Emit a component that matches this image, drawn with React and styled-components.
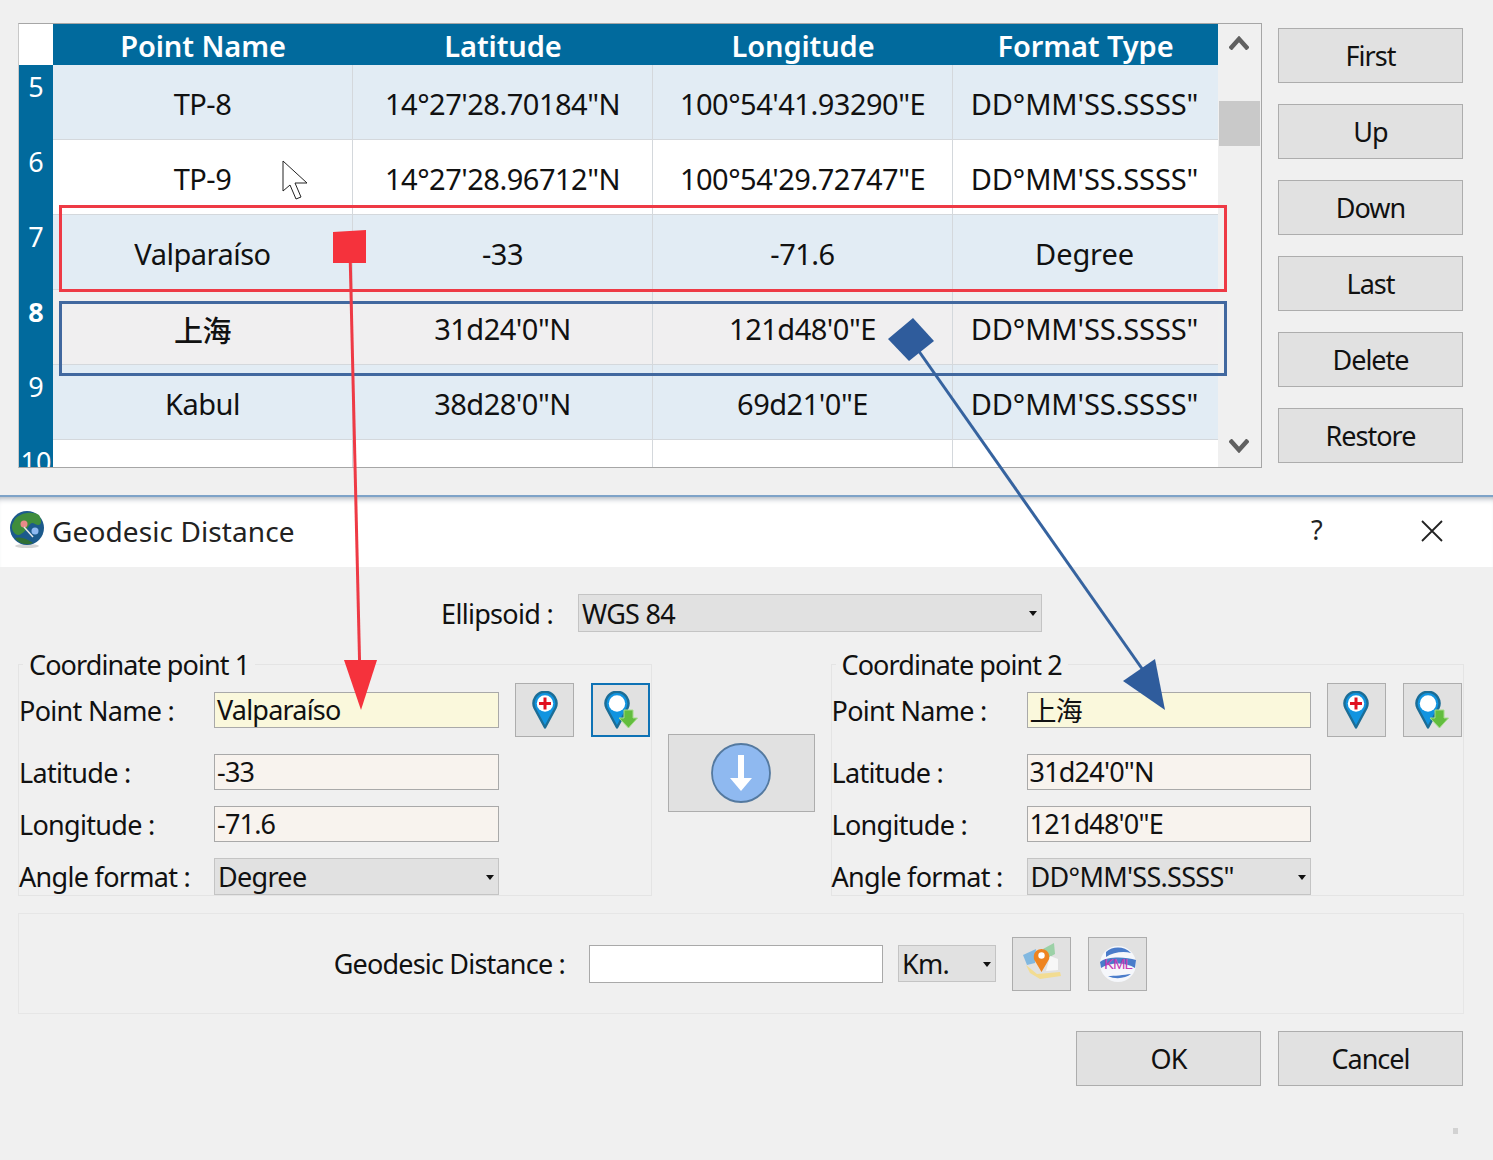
import React from 'react';
import styled, { createGlobalStyle } from 'styled-components';

const rows = [
  { no: 5, name: 'TP-8', lat: `14°27'28.70184"N`, lon: `100°54'41.93290"E`, format: `DD°MM'SS.SSSS"`, tone: 'blue' },
  { no: 6, name: 'TP-9', lat: `14°27'28.96712"N`, lon: `100°54'29.72747"E`, format: `DD°MM'SS.SSSS"`, tone: 'white' },
  { no: 7, name: 'Valparaíso', lat: '-33', lon: '-71.6', format: 'Degree', tone: 'blue' },
  { no: 8, name: '上海', lat: `31d24'0"N`, lon: `121d48'0"E`, format: `DD°MM'SS.SSSS"`, tone: 'grey', current: true },
  { no: 9, name: 'Kabul', lat: `38d28'0"N`, lon: `69d21'0"E`, format: `DD°MM'SS.SSSS"`, tone: 'blue' },
  { no: 10, name: '', lat: '', lon: '', format: '', tone: 'white' },
];

const tones = { blue: '#e2ecf4', white: '#ffffff', grey: '#f0eff0' };
const sideButtons = ['First', 'Up', 'Down', 'Last', 'Delete', 'Restore'];

const GlobalStyle = createGlobalStyle`
  html, body {
    margin: 0;
    padding: 0;
    background: #f0f0f0;
  }
  body {
    font-family: "Noto Sans", "Noto Sans CJK SC", sans-serif;
    color: #111;
  }
`;

const Page = styled.div`
  position: relative;
  width: 1493px;
  height: 1160px;
  overflow: hidden;
  background: #f0f0f0;
`;

const TopPanel = styled.div`
  display: flex;
  gap: 16px;
  padding: 23px 0 0 18px;
  box-sizing: border-box;
  height: 497px;
  border-bottom: 2px solid #7ea3c8;
`;

const Table = styled.div`
  display: grid;
  grid-template-columns: 1fr 43px;
  width: 1244px;
  height: 445px;
  box-sizing: border-box;
  border: 1px solid #a6a6a6;
  border-left-color: #c8c8c8;
  overflow: hidden;
`;

const Grid = styled.div`
  overflow: hidden;
`;

const Row = styled.div`
  display: grid;
  grid-template-columns: 34px 300px 300px 300px 1fr;
  height: ${(p) => (p.$head ? '41px' : '75px')};
`;

const Corner = styled.div`
  background: #fff;
`;

const HeadCell = styled.div`
  display: flex;
  align-items: center;
  justify-content: center;
  background: #016a9d;
  color: #fff;
  font-size: 29px;
  font-weight: 600;
  letter-spacing: -0.1px;
  padding-top: 2px;
  box-sizing: border-box;
  white-space: nowrap;
`;

const RowNo = styled.div`
  background: #016a9d;
  color: #fff;
  font-size: 27px;
  font-weight: ${(p) => (p.$current ? 700 : 400)};
  line-height: 44px;
  text-align: center;
`;

const Cell = styled.div`
  display: flex;
  align-items: center;
  justify-content: center;
  padding-top: 3px;
  box-sizing: border-box;
  background: ${(p) => tones[p.$tone]};
  border-right: 1px solid #d4d8dc;
  border-bottom: 1px solid #d4d8dc;
  font-size: 29px;
  letter-spacing: -0.5px;
  font-weight: ${(p) => (p.$bold ? 500 : 400)};
  white-space: nowrap;
  &:last-child {
    border-right: 0;
    letter-spacing: -0.1px;
    padding-right: 2px;
  }
`;

const Scrollbar = styled.div`
  display: flex;
  flex-direction: column;
  align-items: center;
  background: #f0f0f0;
  position: relative;
`;

const ScrollThumb = styled.div`
  width: 41px;
  height: 45px;
  margin-top: 77px;
  background: #c9c9c9;
`;

const ScrollArrow = styled.svg`
  position: absolute;
  left: 11px;
  top: ${(p) => p.$top}px;
`;

const SideButtons = styled.div`
  display: flex;
  flex-direction: column;
  gap: 21px;
  padding-top: 5px;
`;

const Button = styled.div`
  display: flex;
  align-items: center;
  justify-content: center;
  width: ${(p) => p.$w || 185}px;
  height: ${(p) => p.$h || 55}px;
  flex: none;
  box-sizing: border-box;
  background: #e1e1e1;
  border: ${(p) => (p.$focus ? '2px solid #0e72b5' : '1px solid #adadad')};
  font-size: 27px;
  letter-spacing: -1px;
`;

const TitleBar = styled.div`
  display: flex;
  align-items: center;
  height: 70px;
  background: #fff;
  padding-left: 9px;
  box-shadow: inset 0 6px 6px -5px #9aa3ad;
  font-size: 28px;
  letter-spacing: 0.1px;
  color: #222;
`;

const TitleText = styled.div`
  margin-left: 7px;
  padding-bottom: 2px;
  flex: 1;
`;

const HelpMark = styled.div`
  width: 72px;
  padding-bottom: 5px;
  font-size: 27px;
`;

const CloseMark = styled.svg`
  margin-right: 50px;
  margin-left: 38px;
  margin-bottom: 2px;
`;

const GlobeSvg = styled.svg`
  flex: none;
  margin-bottom: 5px;
`;

const Dialog = styled.div`
  padding: 27px 29px 0 18px;
`;

const EllipsoidRow = styled.div`
  display: flex;
  align-items: center;
  height: 38px;
  margin-bottom: 32px;
`;

const EllipsoidLabel = styled.div`
  width: 560px;
  padding-right: 25px;
  box-sizing: border-box;
  text-align: right;
  font-size: 27px;
  letter-spacing: -0.7px;
`;

const Select = styled.div`
  position: relative;
  display: flex;
  align-items: center;
  width: ${(p) => p.$w}px;
  height: ${(p) => p.$h || 38}px;
  margin-left: ${(p) => p.$left || 0}px;
  padding-left: 3px;
  box-sizing: border-box;
  background: #e1e1e1;
  border: 1px solid #c4c4c4;
  font-size: 27px;
  letter-spacing: -0.7px;
  white-space: nowrap;
  &::after {
    content: '';
    position: absolute;
    right: 4px;
    top: 50%;
    margin-top: -2px;
    border: 4px solid transparent;
    border-top: 5px solid #111;
    border-bottom: 0;
  }
`;

const Groups = styled.div`
  display: flex;
  gap: 16px;
`;

const Group = styled.div`
  position: relative;
  width: 634px;
  height: 232px;
  box-sizing: border-box;
  padding: 18px 0 0 0;
  border: 1px solid #e4e4e4;
`;

const GroupTitle = styled.div`
  position: absolute;
  left: 4px;
  top: -18px;
  padding: 0 6px;
  background: #f0f0f0;
  font-size: 27px;
  letter-spacing: -0.9px;
  line-height: 36px;
`;

const Field = styled.div`
  display: flex;
  align-items: center;
  height: ${(p) => p.$h || 36}px;
  margin-bottom: ${(p) => p.$gap || 16}px;
`;

const FieldLabel = styled.div`
  width: 195px;
  flex: none;
  font-size: 27px;
  letter-spacing: -0.7px;
  white-space: nowrap;
`;

const Input = styled.div`
  display: flex;
  align-items: center;
  width: ${(p) => p.$w || 285}px;
  height: ${(p) => p.$h || 36}px;
  padding: 0 0 2px 2px;
  box-sizing: border-box;
  flex: none;
  background: ${(p) => p.$bg || '#f8f3ee'};
  border: 1px solid #a9a9a9;
  font-size: 27px;
  letter-spacing: -0.8px;
`;

const PinButtons = styled.div`
  display: flex;
  gap: 17px;
  margin-left: 16px;
`;

const MiddleColumn = styled.div`
  padding-top: 70px;
`;

const DistanceBox = styled.div`
  display: flex;
  align-items: center;
  height: 101px;
  margin-top: 17px;
  box-sizing: border-box;
  border: 1px solid #e6e6e6;
`;

const DistanceLabel = styled.div`
  width: 570px;
  padding-right: 24px;
  box-sizing: border-box;
  text-align: right;
  font-size: 27px;
  letter-spacing: -0.8px;
`;

const DistanceTools = styled.div`
  display: flex;
  gap: 17px;
  margin-left: 16px;
`;

const Footer = styled.div`
  display: flex;
  justify-content: flex-end;
  gap: 17px;
  margin-top: 17px;
  padding-right: 1px;
`;

const Grip = styled.div`
  position: absolute;
  right: 35px;
  bottom: 26px;
  width: 5px;
  height: 6px;
  background: #d2d2d2;
`;

const Annotations = styled.svg`
  position: absolute;
  left: 0;
  top: 0;
  pointer-events: none;
`;

const AddPin = () => (
  <svg width="26" height="38" viewBox="0 0 26 38">
    <path d="M13 36.5 L2.5 17 A11.5 11.5 0 1 1 23.5 17 Z" fill="#1194e0" stroke="#1c6d96" strokeWidth="2.4" strokeLinejoin="round" />
    <circle cx="13" cy="12.5" r="8.2" fill="#fff" />
    <path d="M13 6.5v12M7 12.5h12" stroke="#e01020" strokeWidth="3" />
  </svg>
);

const ImportPin = () => (
  <svg width="34" height="38" viewBox="0 0 34 38">
    <path d="M13 36.5 L2.5 17 A11.5 11.5 0 1 1 23.5 17 Z" fill="#1194e0" stroke="#1c6d96" strokeWidth="2.4" strokeLinejoin="round" />
    <circle cx="13" cy="12.5" r="8.2" fill="#fff" />
    <path d="M20 19h9v8h4.500L24.500 37 15 27h5z" fill="#62bd3e" stroke="#a6dc8c" strokeWidth="1" />
  </svg>
);

const DownCircle = () => (
  <svg width="60" height="60" viewBox="0 0 60 60">
    <circle cx="30" cy="30" r="29" fill="#8fb9f0" stroke="#54799f" strokeWidth="1.800" />
    <path d="M27 12h6v26h-6z" fill="#fff" />
    <path d="M19 35h22L30 48z" fill="#fff" />
  </svg>
);

const MapIcon = () => (
  <svg width="44" height="42" viewBox="0 0 44 42">
    <path d="M3 12 L16 6 L15 20 L7 22z" fill="#6aaee0" opacity="0.8" />
    <path d="M23 6 L34 0 L35 11 L28 15z" fill="#8fce9c" opacity="0.85" />
    <path d="M6 22 L17 31 L40 29 L41 33 L20 36 L10 30z" fill="#f2dc92" />
    <path d="M30 13 L38 16 L38 27 L26 28z" fill="#f7f7f7" />
    <path d="M21.500 29 L15 18 A7.800 7.800 0 1 1 28 18 Z" fill="#ee8420" />
    <circle cx="21.500" cy="12.500" r="3.200" fill="#fff" />
  </svg>
);

const KmlIcon = () => (
  <svg width="40" height="40" viewBox="0 0 40 40">
    <circle cx="20" cy="20" r="18" fill="#f5f7fb" />
    <path d="M8 8 C15 2 26 2 33 9 C26 7 15 8 8 13z" fill="#4a7cca" />
    <path d="M2 18 C10 12 28 13 38 16 L37 24 C28 18 12 18 3 24z" fill="#4a7cca" />
    <path d="M10 32 C18 36 28 34 33 30 C26 31 16 32 10 32z" fill="#4a7cca" />
    <text x="20" y="25" textAnchor="middle" fontSize="15" fontFamily="Liberation Sans" fill="#c43ab4">KML</text>
  </svg>
);

const GlobeIcon = () => (
  <GlobeSvg width="36" height="38" viewBox="0 0 36 38">
    <ellipse cx="18" cy="35" rx="12" ry="2" fill="#d5d5d5" />
    <circle cx="18" cy="17" r="17" fill="#1c5a8c" />
    <path d="M6 8 C12 1 24 0 30 4 C34 11 32 16 26 13 C20 9 20 19 12 23 C8 26 2 21 3 14z" fill="#3f8d3c" />
    <path d="M6 27 C12 25 20 29 24 32 C16 35 10 32 6 27z" fill="#2f6f34" />
    <circle cx="15" cy="13" r="3.500" fill="#e88a8a" />
    <circle cx="26" cy="20" r="3.500" fill="#8fb9f0" />
    <path d="M15 16 L24 26" stroke="#e8e8e8" strokeWidth="1.500" />
  </GlobeSvg>
);

const CoordinateGroup = ({ title, point, focus, inputWidth }) => (
  <Group>
    <GroupTitle>{title}</GroupTitle>
    <Field $h={54} $gap={17}>
      <FieldLabel>Point Name :</FieldLabel>
      <Input $bg="#faf8dc" $w={inputWidth}>{point.name}</Input>
      <PinButtons>
        <Button $w={59} $h={54}><AddPin /></Button>
        <Button $w={59} $h={54} $focus={focus}><ImportPin /></Button>
      </PinButtons>
    </Field>
    <Field>
      <FieldLabel>Latitude :</FieldLabel>
      <Input $w={inputWidth}>{point.lat}</Input>
    </Field>
    <Field>
      <FieldLabel>Longitude :</FieldLabel>
      <Input $w={inputWidth}>{point.lon}</Input>
    </Field>
    <Field $h={37} $gap={1}>
      <FieldLabel>Angle format :</FieldLabel>
      <Select $w={inputWidth} $h={37}>{point.format}</Select>
    </Field>
  </Group>
);

const App = () => {
  return (
    <Page>
      <GlobalStyle />
      <TopPanel>
        <Table>
          <Grid>
            <Row $head>
              <Corner />
              <HeadCell>Point Name</HeadCell>
              <HeadCell>Latitude</HeadCell>
              <HeadCell>Longitude</HeadCell>
              <HeadCell>Format Type</HeadCell>
            </Row>
            {rows.map((r) => (
              <Row key={r.no}>
                <RowNo $current={r.current}>{r.no}</RowNo>
                <Cell $tone={r.tone} $bold={r.current}>{r.name}</Cell>
                <Cell $tone={r.tone}>{r.lat}</Cell>
                <Cell $tone={r.tone}>{r.lon}</Cell>
                <Cell $tone={r.tone}>{r.format}</Cell>
              </Row>
            ))}
          </Grid>
          <Scrollbar>
            <ScrollArrow $top={12} width="20" height="14" viewBox="0 0 20 14">
              <path d="M1 13 L10 3 L19 13" fill="none" stroke="#606060" strokeWidth="4.500" />
            </ScrollArrow>
            <ScrollThumb />
            <ScrollArrow $top={415} width="20" height="14" viewBox="0 0 20 14">
              <path d="M1 1 L10 11 L19 1" fill="none" stroke="#606060" strokeWidth="4.500" />
            </ScrollArrow>
          </Scrollbar>
        </Table>
        <SideButtons>
          {sideButtons.map((b) => (
            <Button key={b}>{b}</Button>
          ))}
        </SideButtons>
      </TopPanel>

      <TitleBar>
        <GlobeIcon />
        <TitleText>Geodesic Distance</TitleText>
        <HelpMark>?</HelpMark>
        <CloseMark width="22" height="22" viewBox="0 0 22 22">
          <path d="M1 1 L21 21 M21 1 L1 21" stroke="#222" strokeWidth="1.800" />
        </CloseMark>
      </TitleBar>

      <Dialog>
        <EllipsoidRow>
          <EllipsoidLabel>Ellipsoid :</EllipsoidLabel>
          <Select $w={464}>WGS 84</Select>
        </EllipsoidRow>
        <Groups>
          <CoordinateGroup
            title="Coordinate point 1"
            focus
            inputWidth={285}
            point={{ name: 'Valparaíso', lat: '-33', lon: '-71.6', format: 'Degree' }}
          />
          <MiddleColumn>
            <Button $w={147} $h={78}><DownCircle /></Button>
          </MiddleColumn>
          <CoordinateGroup
            title="Coordinate point 2"
            inputWidth={284}
            point={{ name: '上海', lat: `31d24'0"N`, lon: `121d48'0"E`, format: `DD°MM'SS.SSSS"` }}
          />
        </Groups>
        <DistanceBox>
          <DistanceLabel>Geodesic Distance :</DistanceLabel>
          <Input $w={294} $h={38} $bg="#fff" />
          <Select $w={98} $h={37} $left={15}>Km.</Select>
          <DistanceTools>
            <Button $w={59} $h={54}><MapIcon /></Button>
            <Button $w={59} $h={54}><KmlIcon /></Button>
          </DistanceTools>
        </DistanceBox>
        <Footer>
          <Button>OK</Button>
          <Button>Cancel</Button>
        </Footer>
      </Dialog>
      <Grip />

      <Annotations width="1493" height="1160" viewBox="0 0 1493 1160">
        <rect x="60.500" y="206.500" width="1165" height="84" fill="none" stroke="#ee3a45" strokeWidth="3" />
        <rect x="60.500" y="302.500" width="1165" height="72" fill="none" stroke="#41689f" strokeWidth="3" />
        <path d="M350 250 L360 680" stroke="#ee3a45" strokeWidth="3" />
        <path d="M333 232 L366 230 L366 263 L333 263z" fill="#f5323c" />
        <path d="M344 660 L377 660 L361 710z" fill="#f5323c" />
        <path d="M911 340 L1150 680" stroke="#36639f" strokeWidth="3" />
        <path d="M888 339 L913 318 L934 341 L909 361z" fill="#2f5c9c" />
        <path d="M1123 681 L1155 659 L1165 710z" fill="#2f5c9c" />
        <path d="M283 161 L283 191 L290 185 L296 199 L301 197 L295 183 L307 183z" fill="#fff" stroke="#222" strokeWidth="1" />
      </Annotations>
    </Page>
  );
};

export default App;
